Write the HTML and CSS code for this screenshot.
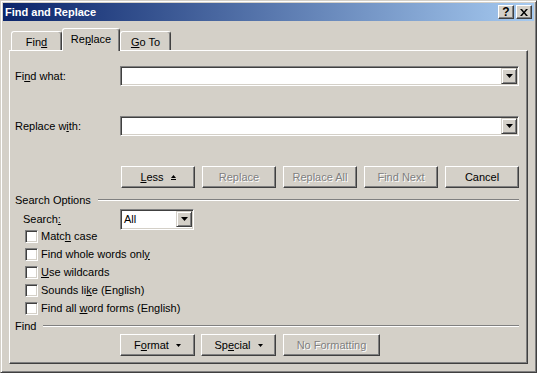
FILE: index.html
```html
<!DOCTYPE html>
<html lang="en">
<head>
<meta charset="UTF-8" />
<title>Find and Replace</title>
<link rel="stylesheet" href="styles.css">
</head>
<body>
<div class="window">
    <div class="titlebar">
        <span class="title">Find and Replace</span>
        <div class="title-btn help">?</div>
        <div class="title-btn close">
            <svg width="8" height="7" viewBox="0 0 8 7"><path d="M0 0h2l2 2.5 2-2.5h2l-3 3.5 3 3.5h-2l-2-2.5-2 2.5h-2l3-3.5z" fill="#000"/></svg>
        </div>
    </div>

    <div class="dialog-body">
        <div class="tabs">
            <div class="tab tab-find"><span>Fin<u>d</u></span></div>
            <div class="tab tab-replace active"><span>Re<u>p</u>lace</span></div>
            <div class="tab tab-goto"><span><u>G</u>o To</span></div>
        </div>

        <div class="panel">
            <div class="field-row">
                <span class="field-label">Fi<u>n</u>d what:</span>
                <div class="combo">
                    <div class="combo-text"></div>
                    <div class="drop-btn"><svg width="7" height="4" viewBox="0 0 7 4"><path d="M0 0h7l-3.5 4z" fill="#000"/></svg></div>
                </div>
            </div>
            <div class="field-row second">
                <span class="field-label">Replace w<u>i</u>th:</span>
                <div class="combo">
                    <div class="combo-text"></div>
                    <div class="drop-btn"><svg width="7" height="4" viewBox="0 0 7 4"><path d="M0 0h7l-3.5 4z" fill="#000"/></svg></div>
                </div>
            </div>

            <div class="button-row">
                <div class="btn"><span><u>L</u>ess</span><svg class="btn-icon" width="5" height="5" viewBox="0 0 5 5"><path d="M2.5 0l2.5 3h-5z" fill="#000"/><rect y="4" width="5" height="1" fill="#000"/></svg></div>
                <div class="btn disabled"><span>Replace</span></div>
                <div class="btn disabled"><span>Replace All</span></div>
                <div class="btn disabled"><span>Find Next</span></div>
                <div class="btn"><span>Cancel</span></div>
            </div>

            <div class="separator">
                <span>Search Options</span>
                <div class="sep-line"></div>
            </div>

            <div class="search-row">
                <span class="search-label">Search<u>:</u></span>
                <div class="combo select">
                    <div class="combo-text">All</div>
                    <div class="drop-btn"><svg width="7" height="4" viewBox="0 0 7 4"><path d="M0 0h7l-3.5 4z" fill="#000"/></svg></div>
                </div>
            </div>

            <div class="check-list">
                <div class="check-row"><span class="checkbox"></span><span>Matc<u>h</u> case</span></div>
                <div class="check-row"><span class="checkbox"></span><span>Find whole words onl<u>y</u></span></div>
                <div class="check-row"><span class="checkbox"></span><span><u>U</u>se wildcards</span></div>
                <div class="check-row"><span class="checkbox"></span><span>Sounds li<u>k</u>e (English)</span></div>
                <div class="check-row"><span class="checkbox"></span><span>Find all <u>w</u>ord forms (English)</span></div>
            </div>

            <div class="separator find-sep">
                <span>Find</span>
                <div class="sep-line"></div>
            </div>

            <div class="format-row">
                <div class="btn fmt"><span>F<u>o</u>rmat</span><svg class="btn-icon" width="5" height="3" viewBox="0 0 5 3"><path d="M0 0h5l-2.5 3z" fill="#000"/></svg></div>
                <div class="btn fmt special"><span>Sp<u>e</u>cial</span><svg class="btn-icon" width="5" height="3" viewBox="0 0 5 3"><path d="M0 0h5l-2.5 3z" fill="#000"/></svg></div>
                <div class="btn disabled no-fmt"><span>No Formatting</span></div>
            </div>
        </div>
    </div>
</div>
</body>
</html>
```

FILE: styles.css
```css
body {
    margin: 0;
    background: #d4d0c8;
    font-family: 'Liberation Sans', Arial, sans-serif;
    font-size: 11px;
    color: #000;
}
u {
    text-decoration-thickness: 1px;
    text-underline-offset: 1px;
}
.window {
    box-sizing: border-box;
    width: 537px;
    height: 373px;
    display: flex;
    flex-direction: column;
    padding: 2px;
    background: #d4d0c8;
    border: 1px solid;
    border-color: #d4d0c8 #404040 #404040 #d4d0c8;
    box-shadow: inset 1px 1px #fff, inset -1px -1px #808080;
}
.titlebar {
    height: 18px;
    display: flex;
    align-items: center;
    padding: 0 2px;
    background: linear-gradient(to right, #0a246a, #a6caf0);
}
.title {
    flex: 1;
    color: #fff;
    font-weight: bold;
    font-size: 11px;
}
.title-btn {
    box-sizing: border-box;
    width: 16px;
    height: 14px;
    display: flex;
    align-items: center;
    justify-content: center;
    background: #d4d0c8;
    border: 1px solid;
    border-color: #fff #404040 #404040 #fff;
    box-shadow: inset -1px -1px #808080;
    font-weight: bold;
    font-size: 12px;
}
.title-btn.close {
    margin-left: 2px;
}
.dialog-body {
    flex: 1;
    display: flex;
    flex-direction: column;
    padding: 7px 6px 6px 6px;
}
.tabs {
    height: 22px;
    display: flex;
    align-items: flex-end;
    padding-left: 2px;
}
.tab {
    box-sizing: border-box;
    height: 19px;
    display: flex;
    align-items: center;
    justify-content: center;
    padding-top: 1px;
    border: 1px solid;
    border-bottom: none;
    border-color: #fff #404040 #fff #fff;
    border-radius: 3px 3px 0 0;
    box-shadow: inset -1px 0 #808080;
}
.tab-find { width: 51px; }
.tab-goto { width: 51px; }
.tab-replace { width: 58px; }
.tab.active {
    height: 23px;
    margin-bottom: -1px;
    padding-bottom: 3px;
    position: relative;
    z-index: 1;
    background: #d4d0c8;
}
.panel {
    flex: 1;
    display: flex;
    flex-direction: column;
    padding: 0 8px 0 5px;
    border: 1px solid;
    border-color: #fff #404040 #404040 #fff;
    box-shadow: inset -1px -1px #808080;
}
.field-row {
    height: 20px;
    display: flex;
    align-items: center;
    margin-top: 15px;
}
.field-row.second {
    margin-top: 30px;
}
.field-label {
    width: 105px;
}
.combo {
    box-sizing: border-box;
    flex: 1;
    height: 20px;
    display: flex;
    padding: 2px;
    background: #fff;
    border: 1px solid;
    border-color: #808080 #fff #fff #808080;
    box-shadow: inset 1px 1px #404040, inset -1px -1px #d4d0c8;
}
.combo-text {
    flex: 1;
    line-height: 14px;
    padding-left: 1px;
}
.drop-btn {
    box-sizing: border-box;
    width: 16px;
    height: 16px;
    margin: -1px -1px -1px 0;
    display: flex;
    align-items: center;
    justify-content: center;
    background: #d4d0c8;
    border: 1px solid;
    border-color: #d4d0c8 #404040 #404040 #d4d0c8;
    box-shadow: inset 1px 1px #fff, inset -1px -1px #808080;
}
.button-row {
    display: flex;
    gap: 7px;
    margin: 30px 0 0 106px;
}
.btn {
    box-sizing: border-box;
    width: 74px;
    height: 22px;
    display: flex;
    align-items: center;
    justify-content: center;
    gap: 7px;
    border: 1px solid;
    border-color: #fff #404040 #404040 #fff;
    box-shadow: inset -1px -1px #808080;
}
.btn.disabled {
    color: #808080;
    text-shadow: 1px 1px 0 #fff;
}
.btn-icon {
    display: block;
}
.separator {
    height: 13px;
    display: flex;
    align-items: center;
    margin-top: 5px;
}
.sep-line {
    flex: 1;
    margin-left: 7px;
    border-top: 1px solid #808080;
    border-bottom: 1px solid #fff;
}
.search-row {
    height: 20px;
    display: flex;
    align-items: center;
    margin-top: 3px;
}
.search-label {
    width: 97px;
    padding-left: 8px;
}
.combo.select {
    flex: none;
    width: 74px;
    height: 21px;
}
.check-list {
    display: flex;
    flex-direction: column;
    margin-top: -2px;
}
.check-row {
    height: 18px;
    display: flex;
    align-items: center;
    padding-left: 10px;
}
.checkbox {
    box-sizing: border-box;
    width: 13px;
    height: 13px;
    margin-right: 3px;
    background: #fff;
    border: 1px solid;
    border-color: #808080 #fff #fff #808080;
    box-shadow: inset 1px 1px #404040, inset -1px -1px #d4d0c8;
}
.find-sep {
    margin-top: 2px;
}
.format-row {
    display: flex;
    margin: 2px 0 0 105px;
}
.btn.fmt {
    width: 75px;
}
.btn.special {
    margin-left: 6px;
}
.btn.no-fmt {
    width: 97px;
    margin-left: 7px;
}
```
